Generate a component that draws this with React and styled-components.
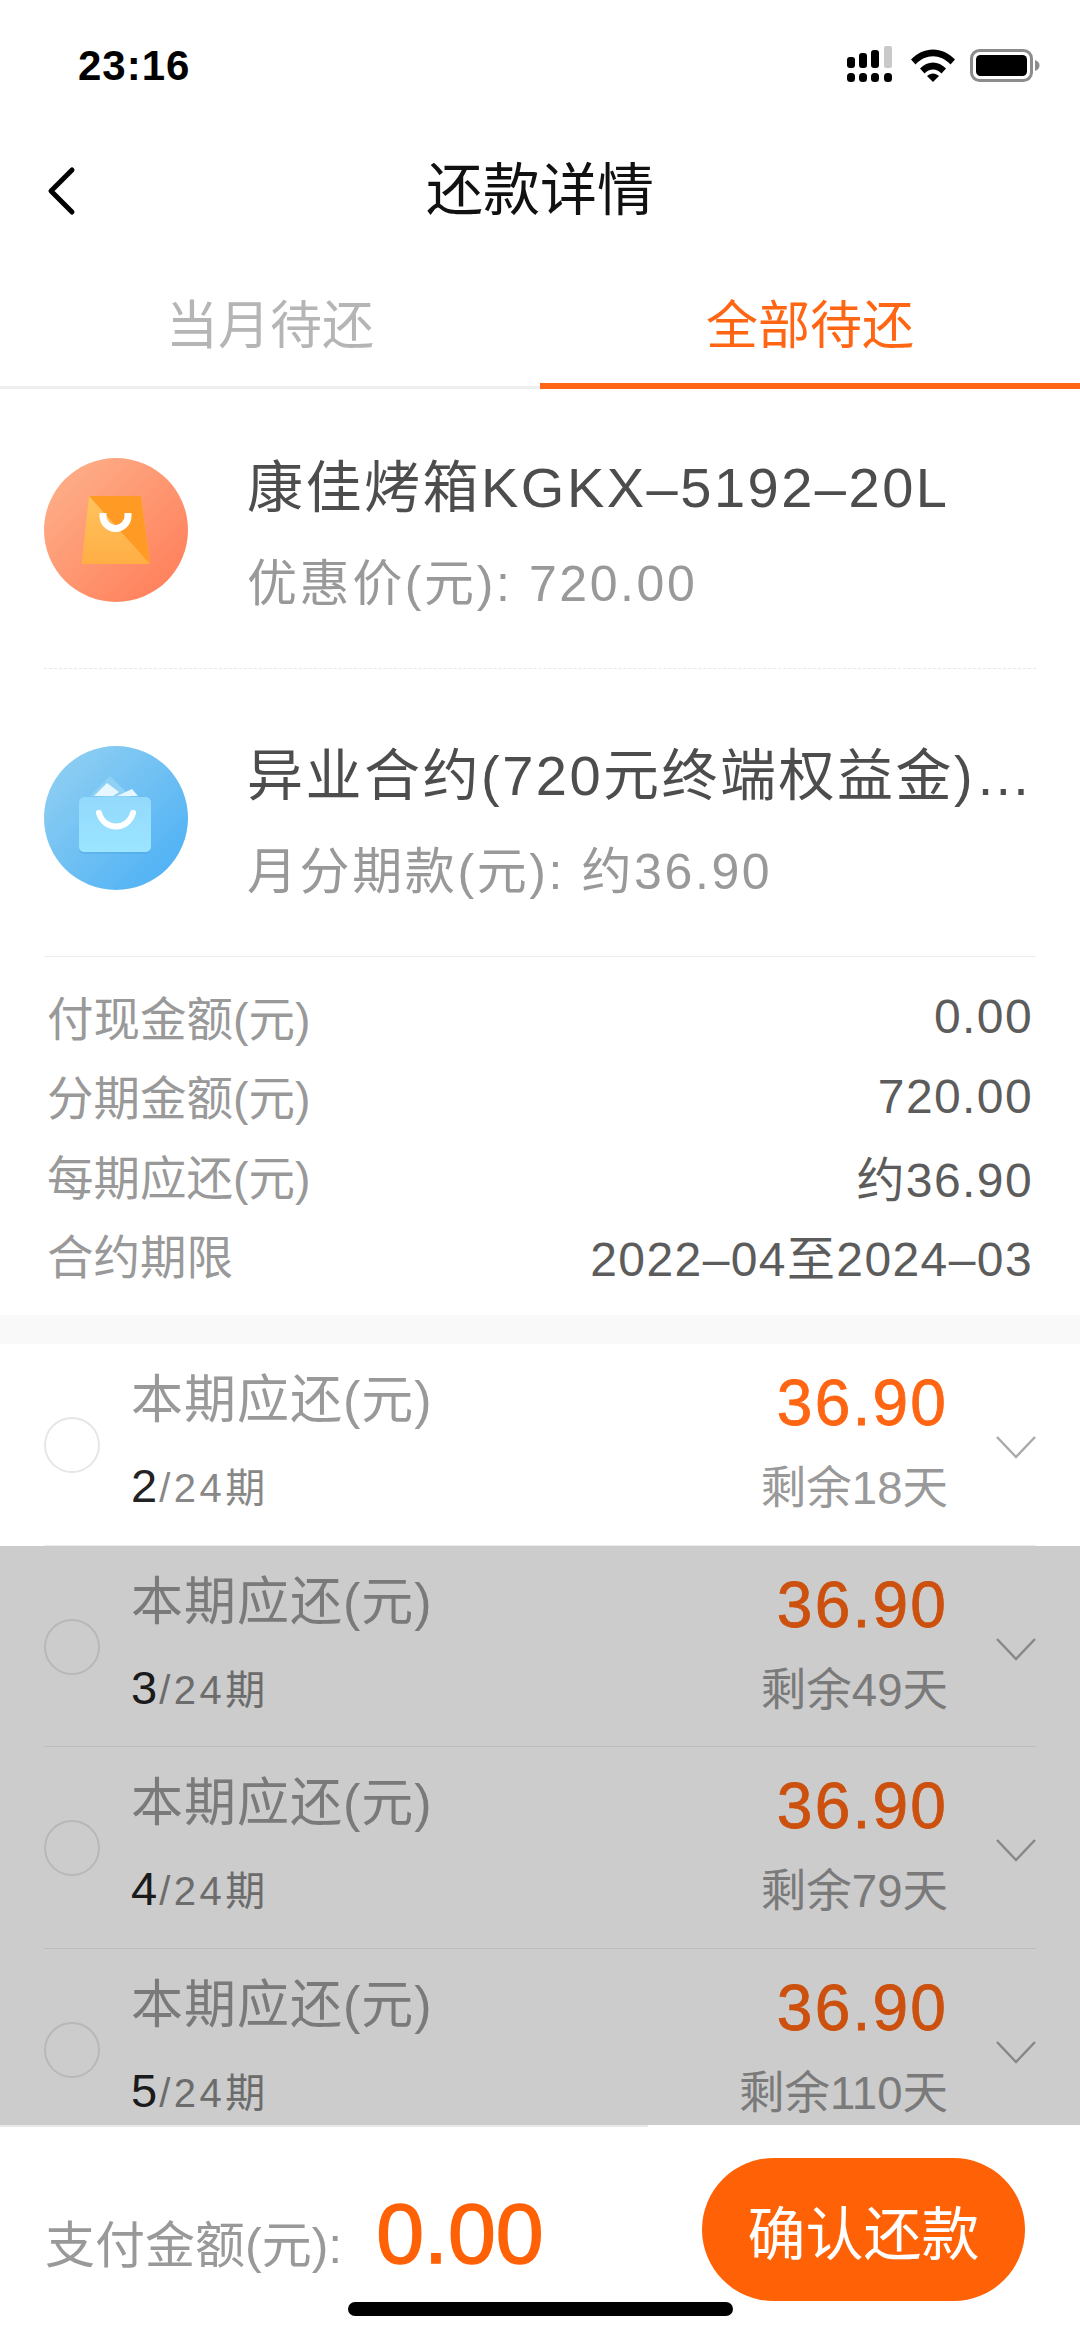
import React from 'react'
import styled, { createGlobalStyle } from 'styled-components'

const Global = createGlobalStyle`
  html, body {
    margin: 0;
    background: #fff;
  }
  * {
    box-sizing: border-box;
  }
`

const Page = styled.div`
  position: relative;
  display: flex;
  flex-direction: column;
  width: 1080px;
  height: 2339px;
  overflow: hidden;
  background: #fff;
  font-family: "Liberation Sans", "Noto Sans CJK SC", sans-serif;
`

const StatusBar = styled.div`
  display: flex;
  align-items: center;
  justify-content: space-between;
  flex: none;
  height: 132px;
  padding: 0 40px 0 78px;
`

const Time = styled.span`
  font-size: 42px;
  font-weight: 700;
  letter-spacing: 1px;
  color: #000;
`

const StatusIcons = styled.div`
  display: flex;
  align-items: center;
  gap: 15px;
  margin-top: -2px;
`

const Nav = styled.div`
  display: grid;
  grid-template-columns: 1fr auto 1fr;
  align-items: center;
  flex: none;
  height: 118px;
  padding: 0 45px;
`

const Title = styled.div`
  margin-top: -3px;
  font-size: 57px;
  line-height: 70px;
  color: #111;
  text-align: center;
`

const Tabs = styled.div`
  display: flex;
  flex: none;
  height: 139px;
`

const Tab = styled.div`
  display: flex;
  justify-content: center;
  flex: 1;
  padding-top: 46px;
  font-size: 52px;
  line-height: 60px;
  color: ${p => (p.$active ? '#ff6512' : '#b5b5b5')};
  border-bottom: ${p => (p.$active ? '6px solid #ff6512' : '3px solid #eeeeee')};
`

const Products = styled.div`
  flex: none;
  margin: 0 44px;
`

const Product = styled.div`
  display: flex;
  align-items: center;
  gap: 59px;
  padding: 69px 0 66px;
  & + & {
    padding-top: 77px;
    border-top: 1px dashed #e8e8e8;
    border-bottom: 1px solid #ececec;
  }
`

const ProductBody = styled.div`
  display: flex;
  flex-direction: column;
  justify-content: center;
  gap: 30px;
  flex: 1;
  min-width: 0;
  height: 144px;
  padding-top: 5px;
`

const ProductName = styled.div`
  flex: none;
  overflow: hidden;
  font-size: 56px;
  line-height: 72px;
  letter-spacing: 2.5px;
  color: #4d4d4d;
  white-space: nowrap;
  text-overflow: ellipsis;
`

const ProductMeta = styled.div`
  flex: none;
  font-size: 50px;
  line-height: 60px;
  letter-spacing: 2.6px;
  color: #999;
`

const Details = styled.div`
  display: grid;
  grid-auto-rows: 79.5px;
  flex: none;
  padding: 20px 47px;
`

const DetailRow = styled.div`
  display: flex;
  align-items: center;
  justify-content: space-between;
`

const DetailLabel = styled.span`
  margin-top: -3px;
  font-size: 46.5px;
  color: #999;
`

const DetailValue = styled.span`
  font-size: 48px;
  letter-spacing: 1.4px;
  color: #5c5c5c;
`

const Gap = styled.div`
  flex: none;
  height: 29px;
  background: #f9f9f9;
`

const List = styled.div`
  flex: 1;
  min-height: 0;
  overflow: hidden;
`

const Dimmed = styled.div`
  position: relative;
  &::after {
    content: '';
    position: absolute;
    inset: 0;
    background: rgba(0, 0, 0, 0.2);
  }
`

const Row = styled.div`
  display: flex;
  align-items: center;
  height: 201.5px;
  margin: 0 44px;
  border-bottom: 1px solid #ececec;
`

const Radio = styled.div`
  flex: none;
  width: 56px;
  height: 56px;
  margin: 2px 31px 0 0;
  border: 2px solid #e6e6e6;
  border-radius: 50%;
`

const RowLeft = styled.div`
  display: flex;
  flex-direction: column;
  gap: 26px;
  flex: 1;
`

const RowRight = styled.div`
  display: flex;
  flex-direction: column;
  align-items: flex-end;
  gap: 26px;
  margin-right: 48px;
  padding-top: 4px;
`

const RowLabel = styled.div`
  font-size: 52px;
  line-height: 60px;
  letter-spacing: 1px;
  color: #999;
`

const Period = styled.div`
  font-size: 40px;
  line-height: 60px;
  letter-spacing: 3.5px;
  color: #888;
`

const PeriodNow = styled.span`
  font-size: 47px;
  letter-spacing: 2px;
  color: #222;
`

const Amount = styled.div`
  font-size: 64px;
  line-height: 60px;
  letter-spacing: 2.2px;
  color: #ff6512;
  -webkit-text-stroke: 0.8px #ff6512;
`

const Remain = styled.div`
  font-size: 45.5px;
  line-height: 60px;
  color: #999;
`

const ChevronSlot = styled.div`
  display: flex;
  margin-top: 6px;
`

const Footer = styled.div`
  position: relative;
  display: flex;
  justify-content: space-between;
  flex: none;
  height: 214px;
  padding: 33px 55px 0 45px;
  &::before {
    content: '';
    position: absolute;
    top: 0;
    left: 0;
    width: 648px;
    height: 2px;
    background: #e9e9e9;
  }
`

const PayInfo = styled.div`
  display: flex;
  align-items: baseline;
  gap: 34px;
  padding-top: 26px;
`

const PayLabel = styled.span`
  font-size: 50px;
  color: #999;
`

const PayAmount = styled.span`
  font-size: 86px;
  color: #ff6106;
  -webkit-text-stroke: 1.5px #ff6106;
`

const ConfirmButton = styled.button`
  width: 323px;
  height: 143px;
  padding: 0;
  border: none;
  border-radius: 72px;
  background: #ff6106;
  color: #fff;
  font-family: inherit;
  font-size: 58px;
`

const HomeIndicator = styled.div`
  position: absolute;
  bottom: 23px;
  left: 348px;
  width: 385px;
  height: 14px;
  border-radius: 7px;
  background: #000;
`

const SignalIcon = () => (
  <svg width="50" height="38" viewBox="0 0 50 38">
    <rect x="1" y="11" width="8" height="11" rx="3" fill="#000" />
    <rect x="13" y="7" width="8" height="15" rx="3" fill="#000" />
    <rect x="25" y="4" width="8" height="18" rx="3" fill="#000" />
    <rect x="38" y="0" width="8" height="22" rx="2" fill="#c9c9c9" />
    <rect x="1" y="27" width="8" height="9" rx="3.5" fill="#000" />
    <rect x="13" y="27" width="8" height="9" rx="3.5" fill="#000" />
    <rect x="25" y="27" width="8" height="9" rx="3.5" fill="#000" />
    <rect x="38" y="27" width="8" height="9" rx="3.5" fill="#000" />
  </svg>
)

const WifiIcon = () => (
  <svg width="44" height="33" viewBox="0 0 44 33">
    <path d="M0 10.5C12.5-3 31.5-3 44 10.5l-4.5 5C29.5 4.500 14.500 4.500 4.500 15.500z" fill="#000" />
    <path d="M9 19.500c7.500-8 18.500-8 26 0l-4.500 5c-5-5.500-12-5.500-17 0z" fill="#000" />
    <path d="M16 27c3.500-3.500 8.500-3.500 12 0l-6 6z" fill="#000" />
  </svg>
)

const BatteryIcon = () => (
  <svg width="70" height="33" viewBox="0 0 70 33">
    <rect x="1.500" y="1.500" width="60" height="30" rx="8" fill="none" stroke="#8c8c8c" strokeWidth="3" />
    <rect x="6" y="6" width="51" height="21" rx="4.500" fill="#000" />
    <path d="M65 11c3 1 4.500 3 4.500 5.500S68 21 65 22z" fill="#8c8c8c" />
  </svg>
)

const BackIcon = () => (
  <svg width="32" height="50" viewBox="0 0 32 50">
    <path d="M27 4L6 25l21 21" fill="none" stroke="#000" strokeWidth="5" strokeLinecap="round" strokeLinejoin="round" />
  </svg>
)

const ChevronDown = () => (
  <svg width="40" height="24" viewBox="0 0 40 24">
    <path d="M1 2l19 20L39 2" fill="none" stroke="#aaa" strokeWidth="2.500" />
  </svg>
)

const OrangeBagIcon = () => (
  <svg width="144" height="144" viewBox="0 0 144 144" style={{ flex: 'none' }}>
    <defs>
      <linearGradient id="og" x1="0" y1="0" x2="1" y2="1">
        <stop offset="0" stopColor="#fdb48e" />
        <stop offset="1" stopColor="#ff7a55" />
      </linearGradient>
      <linearGradient id="ob" x1="0" y1="0" x2="0" y2="1">
        <stop offset="0" stopColor="#ffc35e" />
        <stop offset="1" stopColor="#ffae45" />
      </linearGradient>
    </defs>
    <circle cx="72" cy="72" r="72" fill="url(#og)" />
    <path d="M45 38h52l9 68H37.500z" fill="url(#ob)" />
    <path d="M45 38h52l9 68z" fill="#ff9a24" />
    <path d="M59 55v3a12.500 12.500 0 0 0 25 0v-3" fill="none" stroke="#fff" strokeWidth="7" />
  </svg>
)

const BlueBagIcon = () => (
  <svg width="144" height="144" viewBox="0 0 144 144" style={{ flex: 'none' }}>
    <defs>
      <linearGradient id="bg" x1="0" y1="0" x2="1" y2="1">
        <stop offset="0" stopColor="#96d2f2" />
        <stop offset="1" stopColor="#47aef5" />
      </linearGradient>
      <linearGradient id="bb" x1="0" y1="0" x2="0" y2="1">
        <stop offset="0" stopColor="#93d9fc" />
        <stop offset="1" stopColor="#9be5ff" />
      </linearGradient>
    </defs>
    <circle cx="72" cy="72" r="72" fill="url(#bg)" />
    <path d="M46 50L66 30l22 22z" fill="#8fd0f5" />
    <path d="M50 50l13-13 12 9-6 4z" fill="#e6f7ff" />
    <path d="M73 50l15-7 6 7z" fill="#e6f7ff" />
    <rect x="35" y="51" width="72" height="57" rx="5" fill="#4aa3e0" opacity="0.4" />
    <rect x="35" y="51" width="72" height="55" rx="5" fill="url(#bb)" />
    <path d="M55 67c5 18 29 18 34 0" fill="none" stroke="#fff" strokeWidth="6" strokeLinecap="round" />
  </svg>
)

const details = [
  ['付现金额(元)', '0.00'],
  ['分期金额(元)', '720.00'],
  ['每期应还(元)', '约36.90'],
  ['合约期限', '2022–04至2024–03']
]

const Instalment = ({ now, days }) => (
  <Row>
    <Radio />
    <RowLeft>
      <RowLabel>本期应还(元)</RowLabel>
      <Period><PeriodNow>{now}</PeriodNow>/24期</Period>
    </RowLeft>
    <RowRight>
      <Amount>36.90</Amount>
      <Remain>剩余{days}天</Remain>
    </RowRight>
    <ChevronSlot>
      <ChevronDown />
    </ChevronSlot>
  </Row>
)

export default function App () {
  return (
    <Page>
      <Global />
      <StatusBar>
        <Time>23:16</Time>
        <StatusIcons>
          <SignalIcon />
          <WifiIcon />
          <BatteryIcon />
        </StatusIcons>
      </StatusBar>
      <Nav>
        <BackIcon />
        <Title>还款详情</Title>
      </Nav>
      <Tabs>
        <Tab>当月待还</Tab>
        <Tab $active>全部待还</Tab>
      </Tabs>
      <Products>
        <Product>
          <OrangeBagIcon />
          <ProductBody>
            <ProductName>康佳烤箱KGKX–5192–20L</ProductName>
            <ProductMeta>优惠价(元): 720.00</ProductMeta>
          </ProductBody>
        </Product>
        <Product>
          <BlueBagIcon />
          <ProductBody>
            <ProductName>异业合约(720元终端权益金)24期合约</ProductName>
            <ProductMeta>月分期款(元): 约36.90</ProductMeta>
          </ProductBody>
        </Product>
      </Products>
      <Details>
        {details.map(([label, value]) => (
          <DetailRow key={label}>
            <DetailLabel>{label}</DetailLabel>
            <DetailValue>{value}</DetailValue>
          </DetailRow>
        ))}
      </Details>
      <Gap />
      <List>
        <Instalment now={2} days={18} />
        <Dimmed>
          <Instalment now={3} days={49} />
          <Instalment now={4} days={79} />
          <Instalment now={5} days={110} />
        </Dimmed>
      </List>
      <Footer>
        <PayInfo>
          <PayLabel>支付金额(元):</PayLabel>
          <PayAmount>0.00</PayAmount>
        </PayInfo>
        <ConfirmButton>确认还款</ConfirmButton>
      </Footer>
      <HomeIndicator />
    </Page>
  )
}
